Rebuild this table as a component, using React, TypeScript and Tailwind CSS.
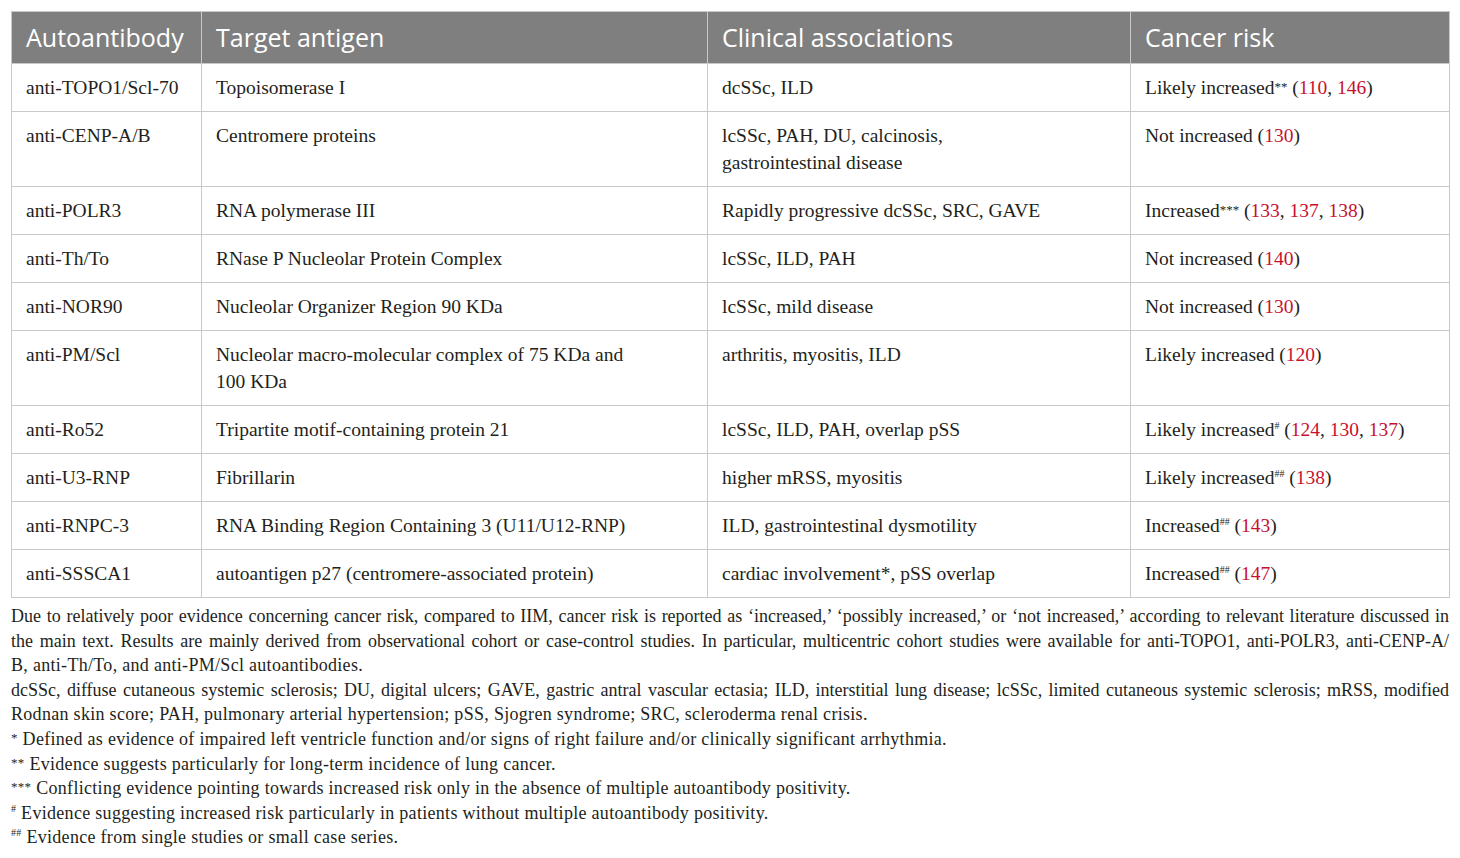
import React from "react";

type Seg = string | { r: string } | { s: string } | { br: true };

const rows: { a: string; t: Seg[]; c: Seg[]; k: Seg[] }[] = [
  { a: "anti-TOPO1/Scl-70", t: ["Topoisomerase I"], c: ["dcSSc, ILD"], k: ["Likely increased", { s: "**" }, " (", { r: "110" }, ", ", { r: "146" }, ")"] },
  { a: "anti-CENP-A/B", t: ["Centromere proteins"], c: ["lcSSc, PAH, DU, calcinosis,", { br: true }, "gastrointestinal disease"], k: ["Not increased (", { r: "130" }, ")"] },
  { a: "anti-POLR3", t: ["RNA polymerase III"], c: ["Rapidly progressive dcSSc, SRC, GAVE"], k: ["Increased", { s: "***" }, " (", { r: "133" }, ", ", { r: "137" }, ", ", { r: "138" }, ")"] },
  { a: "anti-Th/To", t: ["RNase P Nucleolar Protein Complex"], c: ["lcSSc, ILD, PAH"], k: ["Not increased (", { r: "140" }, ")"] },
  { a: "anti-NOR90", t: ["Nucleolar Organizer Region 90 KDa"], c: ["lcSSc, mild disease"], k: ["Not increased (", { r: "130" }, ")"] },
  { a: "anti-PM/Scl", t: ["Nucleolar macro-molecular complex of 75 KDa and", { br: true }, "100 KDa"], c: ["arthritis, myositis, ILD"], k: ["Likely increased (", { r: "120" }, ")"] },
  { a: "anti-Ro52", t: ["Tripartite motif-containing protein 21"], c: ["lcSSc, ILD, PAH, overlap pSS"], k: ["Likely increased", { s: "#" }, " (", { r: "124" }, ", ", { r: "130" }, ", ", { r: "137" }, ")"] },
  { a: "anti-U3-RNP", t: ["Fibrillarin"], c: ["higher mRSS, myositis"], k: ["Likely increased", { s: "##" }, " (", { r: "138" }, ")"] },
  { a: "anti-RNPC-3", t: ["RNA Binding Region Containing 3 (U11/U12-RNP)"], c: ["ILD, gastrointestinal dysmotility"], k: ["Increased", { s: "##" }, " (", { r: "143" }, ")"] },
  { a: "anti-SSSCA1", t: ["autoantigen p27 (centromere-associated protein)"], c: ["cardiac involvement*, pSS overlap"], k: ["Increased", { s: "##" }, " (", { r: "147" }, ")"] },
];

function Mark({ s }: { s: string }) {
  if (s.startsWith("#")) {
    return <span className="relative -top-[7px] text-[10px] leading-none">{s}</span>;
  }
  return <span className="relative -top-[3px] text-[13px] leading-none">{s}</span>;
}

function Rich({ k }: { k: Seg[] }) {
  return (
    <>
      {k.map((s, i) =>
        typeof s === "string" ? (
          <span key={i}>{s}</span>
        ) : "r" in s ? (
          <span key={i} className="text-[#c8102e]">{s.r}</span>
        ) : "br" in s ? (
          <br key={i} />
        ) : (
          <Mark key={i} s={s.s} />
        )
      )}
    </>
  );
}

const cell = "align-top px-[14px] pt-[10px] pb-[10px] border border-[#c9c9c9]";
const head = "text-left font-normal px-[14px] border border-[#c9c9c9]";
const jl = "block text-justify [text-align-last:justify]";
const nl = "block tracking-[0.3px]";

export default function App() {
  return (
    <div className="w-[1460px] h-[858px] bg-white overflow-hidden pt-[11px] px-[11px] font-['Liberation_Serif',serif] text-[#231f20]">
      <table className="w-[1438px] border-collapse table-fixed">
        <colgroup>
          <col className="w-[190px]" />
          <col className="w-[506px]" />
          <col className="w-[423px]" />
          <col className="w-[319px]" />
        </colgroup>
        <thead>
          <tr className="bg-[#7f7f7f] text-white h-[52px] font-['Open_Sans',sans-serif] text-[25px]">
            <th className={head}>Autoantibody</th>
            <th className={head}>Target antigen</th>
            <th className={head}>Clinical associations</th>
            <th className={head}>Cancer risk</th>
          </tr>
        </thead>
        <tbody className="text-[19.5px] leading-[27px]">
          {rows.map((r) => (
            <tr key={r.a}>
              <td className={cell}>{r.a}</td>
              <td className={cell}><Rich k={r.t} /></td>
              <td className={cell}><Rich k={r.c} /></td>
              <td className={cell}><Rich k={r.k} /></td>
            </tr>
          ))}
        </tbody>
      </table>
      <div className="mt-[6px] text-[18px] leading-[24.6px]">
        <div>
          <span className={jl}>Due to relatively poor evidence concerning cancer risk, compared to IIM, cancer risk is reported as ‘increased,’ ‘possibly increased,’ or ‘not increased,’ according to relevant literature discussed in</span>
          <span className={jl}>the main text. Results are mainly derived from observational cohort or case-control studies. In particular, multicentric cohort studies were available for anti-TOPO1, anti-POLR3, anti-CENP-A/</span>
          <span className={nl}>B, anti-Th/To, and anti-PM/Scl autoantibodies.</span>
        </div>
        <div>
          <span className={jl}>dcSSc, diffuse cutaneous systemic sclerosis; DU, digital ulcers; GAVE, gastric antral vascular ectasia; ILD, interstitial lung disease; lcSSc, limited cutaneous systemic sclerosis; mRSS, modified</span>
          <span className={nl}>Rodnan skin score; PAH, pulmonary arterial hypertension; pSS, Sjogren syndrome; SRC, scleroderma renal crisis.</span>
        </div>
        <div className={nl}><Mark s="*" /> Defined as evidence of impaired left ventricle function and/or signs of right failure and/or clinically significant arrhythmia.</div>
        <div className={nl}><Mark s="**" /> Evidence suggests particularly for long-term incidence of lung cancer.</div>
        <div className={nl}><Mark s="***" /> Conflicting evidence pointing towards increased risk only in the absence of multiple autoantibody positivity.</div>
        <div className={nl}><Mark s="#" /> Evidence suggesting increased risk particularly in patients without multiple autoantibody positivity.</div>
        <div className={nl}><Mark s="##" /> Evidence from single studies or small case series.</div>
      </div>
    </div>
  );
}
